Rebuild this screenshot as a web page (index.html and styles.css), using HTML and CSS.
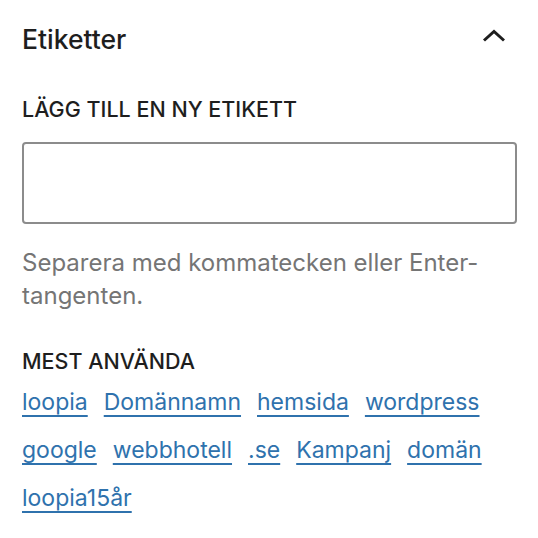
FILE: index.html
```html
<!DOCTYPE html>
<html lang="sv">
<head>
    <meta charset="UTF-8">
    <meta name="viewport" content="width=device-width, initial-scale=1.0">
    <title>Etiketter</title>
    <link rel="stylesheet" href="styles.css">
</head>
<body>
    <div class="panel">
        <div class="panel-header">
            <h2 class="panel-title">Etiketter</h2>
            <svg class="chevron" width="24" height="14" viewBox="0 0 24 14" aria-hidden="true">
                <path d="M2 11.5 L12 2.5 L22 11.5" fill="none" stroke="#1e1e1e" stroke-width="3"/>
            </svg>
        </div>

        <label class="field-label" for="new-tag">Lägg till en ny etikett</label>
        <input id="new-tag" class="tag-input" type="text">
        <p class="help">Separera med kommatecken eller Enter-tangenten.</p>

        <h3 class="field-label most-used">Mest använda</h3>
        <ul class="term-list">
            <li><a href="#">loopia</a></li>
            <li><a href="#">Domännamn</a></li>
            <li><a href="#">hemsida</a></li>
            <li><a href="#">wordpress</a></li>
            <li><a href="#">google</a></li>
            <li><a href="#">webbhotell</a></li>
            <li><a href="#">.se</a></li>
            <li><a href="#">Kampanj</a></li>
            <li><a href="#">domän</a></li>
            <li><a href="#">loopia15år</a></li>
        </ul>
    </div>
</body>
</html>
```

FILE: styles.css
```css
body {
    margin: 0;
    background: #fff;
    font-family: Inter, "Liberation Sans", sans-serif;
    color: #1e1e1e;
}

.panel {
    padding: 0 21px 0 22px;
}

.panel-header {
    display: flex;
    align-items: center;
    justify-content: space-between;
    padding-top: 23px;
    height: 32px;
}

.panel-title {
    margin: 0;
    font-size: 26.5px;
    line-height: 32px;
    font-weight: 500;
}

.chevron {
    margin-right: 11px;
    margin-top: -6px;
}

.field-label {
    display: block;
    margin: 0;
    padding-top: 40px;
    font-size: 21.5px;
    line-height: 28px;
    font-weight: 500;
    text-transform: uppercase;
}

.tag-input {
    display: block;
    box-sizing: border-box;
    width: 100%;
    height: 82px;
    margin: 19px 0 0;
    border: 2px solid #8c8c8c;
    border-radius: 4px;
    font: inherit;
}

.help {
    margin: 22px 0 0;
    font-size: 24px;
    line-height: 33px;
    color: #757575;
}

.most-used {
    padding-top: 35px;
}

.term-list {
    display: flex;
    flex-wrap: wrap;
    column-gap: 16px;
    margin: 3px 0 0;
    padding: 0;
    list-style: none;
}

.term-list a {
    display: block;
    font-size: 23px;
    line-height: 48px;
    color: #2f72ad;
    text-decoration: underline;
    text-decoration-thickness: 2px;
    text-underline-offset: 5px;
}
```
